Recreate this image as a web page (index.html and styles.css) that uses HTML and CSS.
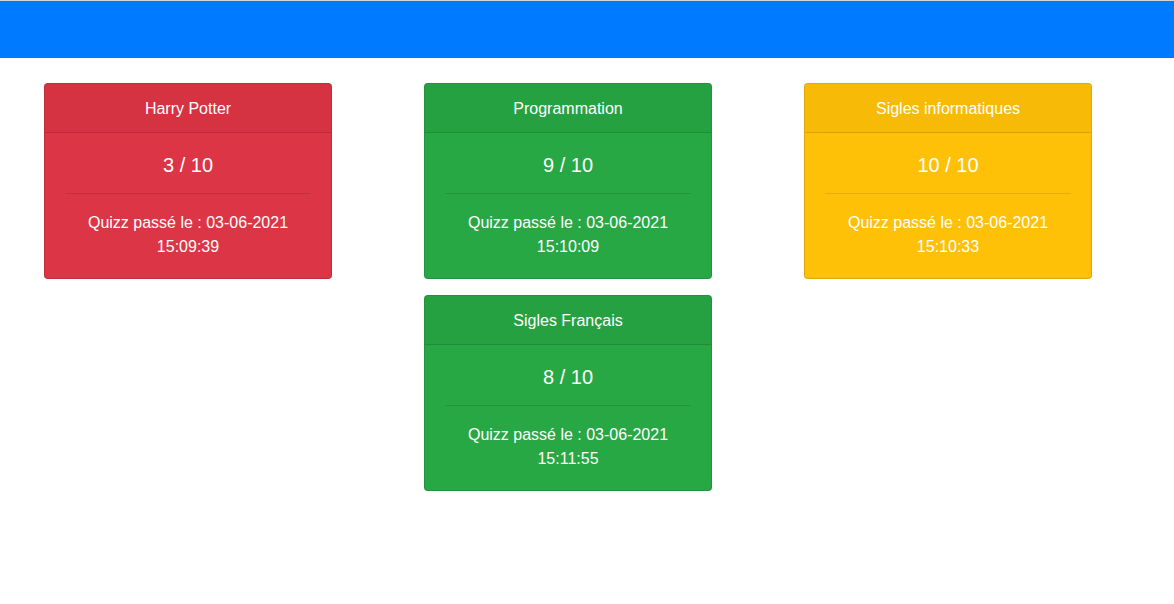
FILE: index.html
```html
<!DOCTYPE html>
<html lang="fr">
<head>
<meta charset="utf-8">
<title>Résultats</title>
<link rel="stylesheet" href="styles.css">
</head>
<body>
<nav class="navbar"></nav>
<main class="results">
  <div class="column">
    <div class="card danger">
      <div class="card-header">Harry Potter</div>
      <div class="card-body">
        <h5 class="score">3 / 10</h5>
        <hr>
        <p class="date">Quizz passé le : 03-06-2021 15:09:39</p>
      </div>
    </div>
  </div>
  <div class="column">
    <div class="card success">
      <div class="card-header">Programmation</div>
      <div class="card-body">
        <h5 class="score">9 / 10</h5>
        <hr>
        <p class="date">Quizz passé le : 03-06-2021 15:10:09</p>
      </div>
    </div>
    <div class="card success">
      <div class="card-header">Sigles Français</div>
      <div class="card-body">
        <h5 class="score">8 / 10</h5>
        <hr>
        <p class="date">Quizz passé le : 03-06-2021 15:11:55</p>
      </div>
    </div>
  </div>
  <div class="column">
    <div class="card warning">
      <div class="card-header">Sigles informatiques</div>
      <div class="card-body">
        <h5 class="score">10 / 10</h5>
        <hr>
        <p class="date">Quizz passé le : 03-06-2021 15:10:33</p>
      </div>
    </div>
  </div>
</main>
</body>
</html>
```
FILE: styles.css
```css
* { box-sizing: border-box; }
html, body { margin: 0; padding: 0; }
body {
  font-family: "Liberation Sans", Arial, sans-serif;
  font-size: 16px;
  line-height: 24px;
  color: #212529;
  background: #fff;
  border-top: 1px solid #d4d4d4;
}
.navbar {
  height: 57px;
  background: #007bff;
}
.results {
  display: grid;
  grid-template-columns: repeat(3, 380px);
  padding: 25px 0 0 44px;
  align-items: start;
}
.column {
  display: flex;
  flex-direction: column;
  gap: 16px;
}
.card {
  width: 288px;
  border: 1px solid rgba(0,0,0,.125);
  border-radius: 4px;
  color: #fff;
  text-align: center;
  overflow: hidden;
}
.card.danger { background: #dc3545; }
.card.success { background: #28a745; }
.card.warning { background: #ffc107; }
.card-header {
  padding: 13px 20px 11px;
  background: rgba(0,0,0,.03);
  border-bottom: 1px solid rgba(0,0,0,.125);
}
.card-body {
  padding: 20px 20px 19px;
}
.score {
  margin: 0;
  font-size: 20px;
  font-weight: 400;
  line-height: 24px;
}
hr {
  margin: 16px 0;
  border: 0;
  border-top: 1px solid rgba(0,0,0,.1);
}
.date {
  margin: 0;
  padding-top: 1px;
}
```
